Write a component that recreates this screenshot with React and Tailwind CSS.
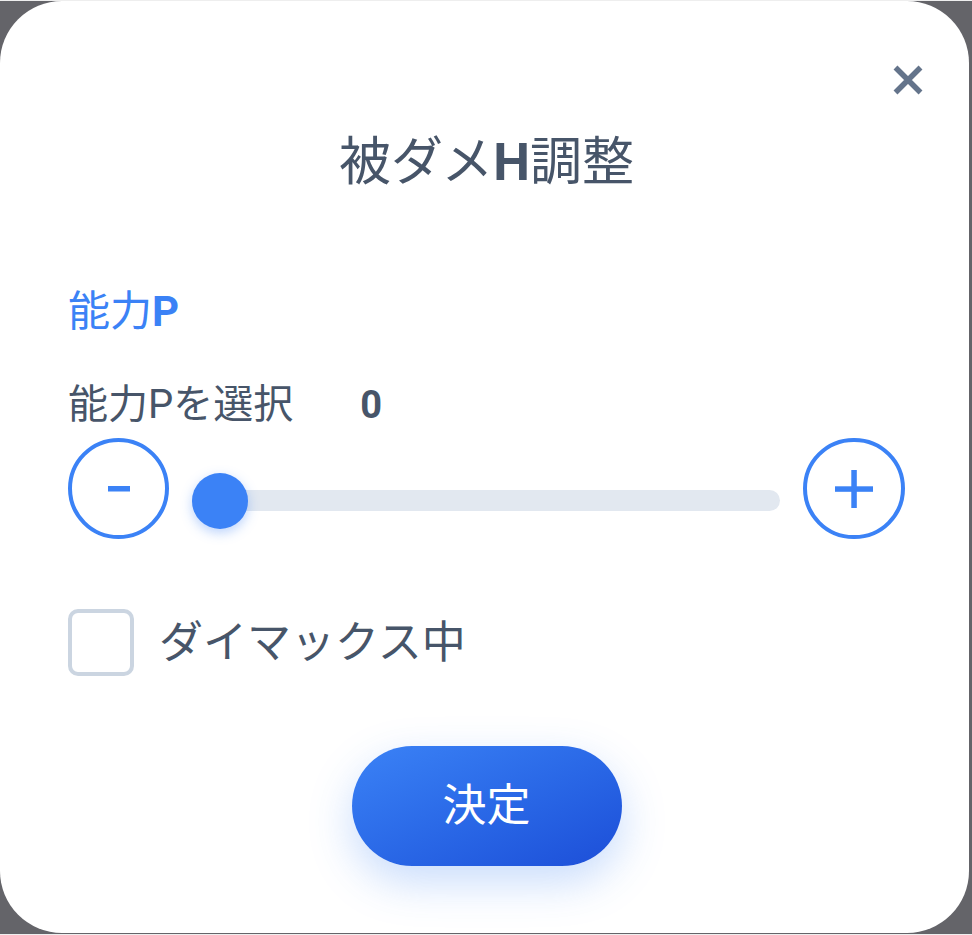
import React from "react";

const font = { fontFamily: '"Roboto", "Noto Sans CJK JP", sans-serif' };

export default function App() {
  return (
    <div className="w-[972px] h-[935px] bg-[#eeeeee] py-px" style={font}>
      <div className="w-full h-full bg-[#646469] pr-[3px] pb-px">
        <div className="relative w-full h-full bg-white rounded-[62px] flex flex-col pl-[68px] pr-[64px] pt-[136px]">
          <button className="absolute top-[63px] right-[45px] w-[32px] h-[32px] flex items-center justify-center">
            <svg width="32" height="32" viewBox="0 0 32 32" fill="none">
              <path d="M3.5 3.5L28.5 28.5M28.5 3.5L3.5 28.5" stroke="#64748b" strokeWidth="5.5" strokeLinecap="butt" />
            </svg>
          </button>

          <h1 className="text-center text-[52px] leading-none font-normal text-[#475569]">
            被ダメ<span className="font-bold">H</span>調整
          </h1>

          <div className="mt-[102px] text-[42px] leading-none font-normal text-[#3b82f6]">
            能力<span className="font-bold">P</span>
          </div>

          <div className="mt-[52px] flex items-center text-[40px] leading-none text-[#475569]">
            <span>能力Pを選択</span>
            <span className="ml-[67px] font-bold text-[38px]">0</span>
          </div>

          <div className="mt-[13px] flex items-center">
            <button className="w-[101px] h-[101px] shrink-0 rounded-full border-[4px] border-[#3b82f6] flex items-center justify-center">
              <svg width="24" height="8" viewBox="0 0 24 8">
                <rect x="1" y="1" width="22" height="5.5" fill="#3b82f6" />
              </svg>
            </button>
            <div className="relative flex-1 ml-[23px] mr-[23px] mt-[24px] h-[56px] flex items-center">
              <div className="w-full h-[21px] rounded-full bg-[#e2e8f0]" />
              <div className="absolute left-0 top-0 w-[56px] h-[56px] rounded-full bg-[#3b82f6] shadow-[0_4px_12px_rgba(59,130,246,0.35)]" />
            </div>
            <button className="w-[102px] h-[101px] shrink-0 rounded-full border-[4px] border-[#3b82f6] flex items-center justify-center">
              <svg width="40" height="40" viewBox="0 0 40 40">
                <rect x="1" y="17.3" width="38" height="5.5" fill="#3b82f6" />
                <rect x="17.3" y="1" width="5.5" height="38" fill="#3b82f6" />
              </svg>
            </button>
          </div>

          <label className="mt-[70px] flex items-center">
            <span className="w-[66px] h-[67px] rounded-[10px] border-[4px] border-[#cbd5e1] bg-white shrink-0" />
            <span className="ml-[25px] text-[44px] leading-none text-[#475569]">ダイマックス中</span>
          </label>

          <div className="mt-[70px] flex justify-center pr-[-4px]">
            <button className="w-[270px] h-[120px] rounded-full bg-linear-to-br from-[#3b82f6] to-[#1d4ed8] text-white text-[44px] leading-none shadow-[0_16px_44px_rgba(59,130,246,0.28)]">
              決定
            </button>
          </div>
        </div>
      </div>
    </div>
  );
}
